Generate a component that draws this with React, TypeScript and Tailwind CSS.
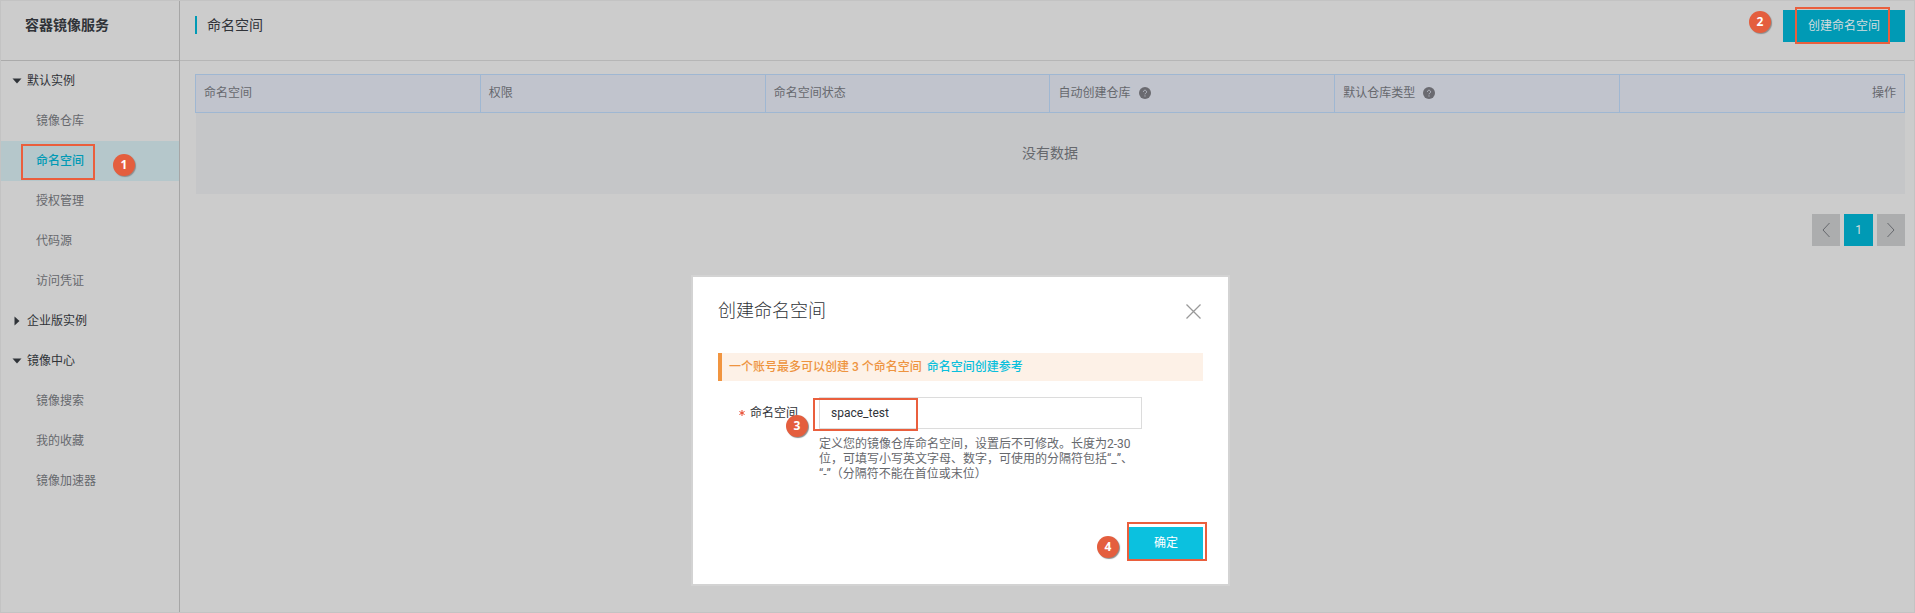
import React from "react";

type NavEntry = { label: string; active?: boolean };
type NavGroup = { label: string; open: boolean; items: NavEntry[] };

const groups: NavGroup[] = [
  {
    label: "默认实例",
    open: true,
    items: [
      { label: "镜像仓库" },
      { label: "命名空间", active: true },
      { label: "授权管理" },
      { label: "代码源" },
      { label: "访问凭证" },
    ],
  },
  { label: "企业版实例", open: false, items: [] },
  {
    label: "镜像中心",
    open: true,
    items: [{ label: "镜像搜索" }, { label: "我的收藏" }, { label: "镜像加速器" }],
  },
];

const columns = [
  { label: "命名空间" },
  { label: "权限" },
  { label: "命名空间状态" },
  { label: "自动创建仓库", help: true },
  { label: "默认仓库类型", help: true },
  { label: "操作", right: true },
];

function Step({ n, className }: { n: number; className: string }) {
  return (
    <span
      className={`pointer-events-none absolute flex size-[22px] items-center justify-center rounded-full bg-[#e45e3e] font-['Open_Sans',sans-serif] text-xs font-bold text-white shadow-[1px_1px_1px_#8c8c8c] ${className}`}
    >
      {n}
    </span>
  );
}

function Frame({ className }: { className: string }) {
  return <span className={`pointer-events-none absolute border-2 border-[#ea5f3d] ${className}`} />;
}

function Caret({ open }: { open: boolean }) {
  return (
    <svg width="10" height="10" viewBox="0 0 10 10" className="shrink-0 fill-[#2f3338]" aria-hidden="true">
      {open ? <path d="M0.5 2.5h9L5 7.5z" /> : <path d="M2.5 0.5v9l5-4.5z" />}
    </svg>
  );
}

function HelpIcon() {
  return (
    <svg width="12" height="12" viewBox="0 0 12 12" aria-hidden="true">
      <circle cx="6" cy="6" r="6" fill="#6a6a70" />
      <path d="M4.4 4.8a1.6 1.6 0 1 1 2.4 1.4c-.6.3-.8.5-.8 1.1" fill="none" stroke="#b4b8c2" strokeWidth="1" />
      <circle cx="6" cy="8.9" r="0.6" fill="#b4b8c2" />
    </svg>
  );
}

function Sidebar() {
  return (
    <aside className="w-[180px] shrink-0 border-r border-[#a6a6a6]">
      <h1 className="flex h-[61px] items-start border-b border-[#ababab] pt-[15px] pl-[25px] text-sm font-bold text-[#303338]">
        容器镜像服务
      </h1>
      <nav className="text-xs">
        {groups.map((group) => (
          <div key={group.label}>
            <button type="button" className="flex h-10 w-full items-center gap-[5px] pl-3 text-[#2f3338]">
              <Caret open={group.open} />
              {group.label}
            </button>
            {group.items.map((item) =>
              item.active ? (
                <div key={item.label} className="relative">
                  <a href="#" className="flex h-10 items-center bg-[#b5c7cb] pl-9 font-medium text-[#009ab5]">
                    {item.label}
                  </a>
                  <Frame className="top-[3px] left-[21px] h-9 w-[74px]" />
                  <Step n={1} className="top-[13px] left-[113px]" />
                </div>
              ) : (
                <a key={item.label} href="#" className="flex h-10 items-center pl-9 text-[#66686d]">
                  {item.label}
                </a>
              )
            )}
          </div>
        ))}
      </nav>
    </aside>
  );
}

function NamespacePage() {
  return (
    <main className="min-w-0 flex-1">
      <header className="flex h-[61px] items-start justify-between border-b border-[#b6b6b6] pt-[10px] pr-[10px] pl-[15px]">
        <h2 className="mt-[6px] flex h-[18px] items-center border-l-2 border-[#009ab5] pl-[10px] text-sm text-[#303338]">
          命名空间
        </h2>
        <div className="relative">
          <button type="button" className="h-8 w-[122px] bg-[#009ab5] text-xs text-[#d4dcde]">
            创建命名空间
          </button>
          <Frame className="-top-[3px] left-3 h-[37px] w-[95px]" />
          <Step n={2} className="top-[1px] -left-[34px]" />
        </div>
      </header>
      <div className="pt-[13px] pr-[10px] pl-[15px]">
        <table className="w-full table-fixed border-collapse">
          <thead>
            <tr className="h-[38px] bg-[#c1c4cd]">
              {columns.map((col) => (
                <th
                  key={col.label}
                  scope="col"
                  className={`border border-[#9fb7d2] px-2 pb-[2px] text-xs font-normal text-[#66686d] ${
                    col.right ? "text-right" : "text-left"
                  }`}
                >
                  <span className="inline-flex items-center gap-2">
                    {col.label}
                    {col.help && <HelpIcon />}
                  </span>
                </th>
              ))}
            </tr>
          </thead>
          <tbody>
            <tr className="h-[81px] bg-[#c5c6c8]">
              <td colSpan={6} className="text-center text-sm text-[#66686d]">
                没有数据
              </td>
            </tr>
          </tbody>
        </table>
        <div className="mt-5 flex justify-end gap-1">
          <button type="button" aria-label="上一页" className="flex h-8 w-7 items-center justify-center bg-[#acadae]">
            <svg width="8" height="16" viewBox="0 0 8 16" className="fill-none stroke-[#66686d]">
              <path d="M7.5 1L1 8l6.5 7" />
            </svg>
          </button>
          <button type="button" className="h-8 w-[29px] bg-[#009ab5] text-xs text-[#d4dcde]">
            1
          </button>
          <button type="button" aria-label="下一页" className="flex h-8 w-7 items-center justify-center bg-[#acadae]">
            <svg width="8" height="16" viewBox="0 0 8 16" className="fill-none stroke-[#66686d]">
              <path d="M0.5 1L7 8l-6.5 7" />
            </svg>
          </button>
        </div>
      </div>
    </main>
  );
}

function CreateDialog() {
  return (
    <section
      role="dialog"
      aria-labelledby="dialog-title"
      className="w-[535px] bg-white px-[25px] pt-5 pb-[25px] shadow-[0_0_0_2px_#d3d3d3]"
    >
      <div className="flex h-7 items-center justify-between">
        <h2 id="dialog-title" className="text-lg font-light text-[#303338]">
          创建命名空间
        </h2>
        <button type="button" aria-label="关闭" className="mr-[2px]">
          <svg width="15" height="15" viewBox="0 0 15 15" className="block fill-none stroke-[#999]">
            <path d="M0.5 0.5l14 14M14.5 0.5l-14 14" strokeWidth="1.3" />
          </svg>
        </button>
      </div>
      <p className="mt-7 flex h-7 items-center gap-[5px] border-l-4 border-[#f19540] bg-[#fdf1e7] pl-[7px] text-xs font-medium text-[#ee9440]">
        一个账号最多可以创建 3 个命名空间
        <a href="#" className="text-[#0abfdc]">
          命名空间创建参考
        </a>
      </p>
      <form className="mt-4 flex" onSubmit={(e) => e.preventDefault()}>
        <div className="relative w-[101px] shrink-0">
          <label htmlFor="namespace" className="flex h-8 items-center gap-[5px] pl-[21px] text-xs text-[#303338]">
            <svg width="6" height="6" viewBox="0 0 6 6" className="stroke-[#e8492f]" aria-hidden="true">
              <path d="M3 0v6M0.4 1.5l5.2 3M5.6 1.5l-5.2 3" />
            </svg>
            命名空间
          </label>
          <Step n={3} className="top-[18px] left-[68px]" />
        </div>
        <div className="relative w-[323px]">
          <input
            id="namespace"
            type="text"
            defaultValue="space_test"
            className="block h-8 w-full border border-[#dcdcdc] bg-white px-[11px] text-xs text-[#303338] outline-none"
          />
          <Frame className="top-[1px] -left-[6px] h-[33px] w-[105px]" />
          <p className="mt-2 text-xs leading-[15px] text-[#66686d] [text-spacing-trim:space-all]">
            定义您的镜像仓库命名空间，设置后不可修改。长度为2-30
            <br />
            位，可填写小写英文字母、数字，可使用的分隔符包括“_”、
            <br />
            “-”（分隔符不能在首位或末位）
          </p>
        </div>
      </form>
      <div className="mt-[45px] flex justify-end">
        <div className="relative">
          <button type="button" className="block h-8 w-[74px] bg-[#0bc1df] text-xs text-white">
            确定
          </button>
          <Frame className="-top-[5px] -left-[2px] h-[39px] w-20" />
          <Step n={4} className="top-[9px] -left-8" />
        </div>
      </div>
    </section>
  );
}

export default function App() {
  return (
    <div className="relative flex min-h-screen bg-[#ccc] font-[Roboto,'Noto_Sans_CJK_SC',sans-serif]">
      <Sidebar />
      <NamespacePage />
      <div className="absolute inset-x-0 top-[277px] flex justify-center pl-[6px]">
        <CreateDialog />
      </div>
      <div className="pointer-events-none absolute inset-0 border border-[#c3c3c3]" />
    </div>
  );
}
